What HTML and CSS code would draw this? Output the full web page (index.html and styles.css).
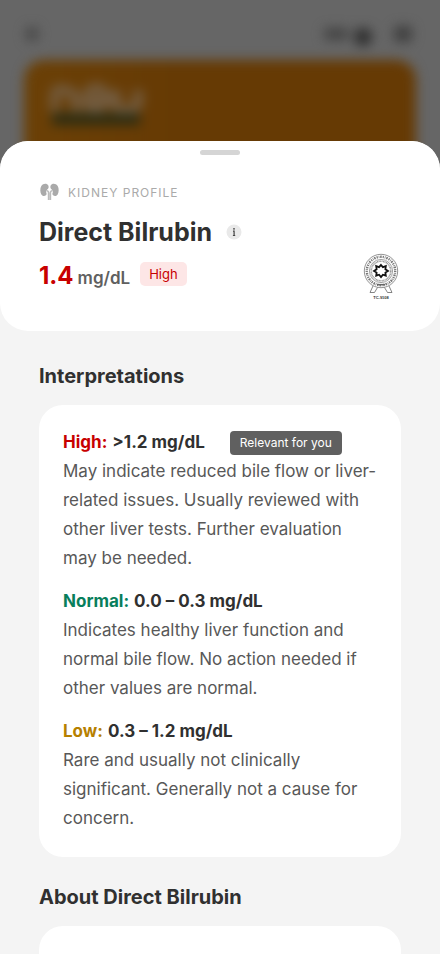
FILE: index.html
```html
<!DOCTYPE html>
<html lang="en">
<head>
<meta charset="utf-8">
<meta name="viewport" content="width=device-width, initial-scale=1">
<title>Direct Bilrubin</title>
<link rel="stylesheet" href="styles.css">
</head>
<body>
<div class="backdrop" aria-hidden="true">
  <div class="behind">
    <div class="topbar">
      <span class="blob"></span>
      <span class="blob wide"></span>
      <span class="blob dark"></span>
      <span class="blob last"></span>
    </div>
    <div class="banner">
      <svg class="logo" viewBox="0 0 94 44">
        <path d="M4 30V16Q4 6 14 8T26 16V30M38 20H56Q56 6 46 6T38 20Q38 30 54 28M66 8V22Q68 30 78 28T88 20V8" fill="none" stroke="#735c40" stroke-width="10"/>
        <rect x="2" y="31" width="88" height="12" fill="#2c2c12"/>
      </svg>
    </div>
  </div>
</div>
<main class="sheet">
  <header class="summary">
    <div class="handle"></div>
    <div class="profile">
      <svg class="kidneys" viewBox="0 0 20 18" aria-hidden="true">
        <path fill="#aaa" d="M7.5 1.2C5.8.2 3.2.8 1.800 3C.4 5.400.5 9.600 2 11.700C3.300 13.500 6.200 13.400 7 11.600C7.500 10.300 6.200 9.300 6.700 8C7.200 6.700 8.900 6.300 9.100 4.600C9.300 3.100 8.700 1.800 7.500 1.200Z"/>
        <path fill="#aaa" d="M12.500 1.200C14.200.2 16.800.8 18.200 3C19.600 5.400 19.500 9.600 18 11.700C16.700 13.500 13.800 13.400 13 11.600C12.500 10.300 13.800 9.300 13.300 8C12.800 6.700 11.100 6.300 10.900 4.600C10.700 3.100 11.300 1.800 12.500 1.200Z"/>
        <path fill="none" stroke="#bbb" stroke-width="1.600" d="M6.800 7.800C8.300 7.500 9.100 8.500 9.100 10V17M13.200 7.800C11.700 7.500 10.900 8.500 10.900 10V17"/>
      </svg>
      <span>KIDNEY PROFILE</span>
    </div>
    <div class="title-row">
      <h1>Direct Bilrubin</h1>
      <button class="info" type="button" aria-label="Information">
        <svg viewBox="0 0 16 16" aria-hidden="true"><circle cx="8" cy="8" r="7.500" fill="#e9e9e9"/><circle cx="8" cy="4.800" r=".9" fill="#444"/><path d="M7 7.200H8.100V11.500M6.900 11.500H9.200" fill="none" stroke="#444" stroke-width="1.200"/></svg>
      </button>
    </div>
    <div class="reading">
      <strong class="value">1.4</strong>
      <span class="unit">mg/dL</span>
      <span class="tag">High</span>
    </div>
    <svg class="seal" viewBox="0 0 36 48" role="img" aria-label="Accreditation TC-9108">
      <g fill="none" stroke="#666">
        <path d="M10 33L7 39.500H11.500L14.500 34.500M26 33L29 39.500H24.500L21.500 34.500" stroke-width=".8"/>
        <circle cx="18" cy="18" r="16.700" stroke-width=".7"/>
        <circle cx="18" cy="18" r="14.200" stroke-width="2.400" stroke-dasharray="1.200 .9 .7 .8 1.600 1" stroke="#777"/>
        <circle cx="18" cy="18" r="11.600" stroke-width=".6"/>
        <circle cx="18" cy="18" r="9.800" stroke-width="1.600" stroke="#999" stroke-dasharray="1 .5"/>
        <path d="M14 31.600H22" stroke-width="1.400"/>
      </g>
      <path d="M18 12L19.900 14.200L22.800 13.200L22.400 16.200L25 17.900L22.400 19.600L22.800 22.600L19.900 21.700L18 24L16.100 21.700L13.200 22.600L13.600 19.600L11 17.900L13.600 16.200L13.200 13.200L16.100 14.200Z" fill="#fff" stroke="#111" stroke-width="1.800"/>
      <text x="18" y="46" text-anchor="middle">TC-9108</text>
    </svg>
  </header>
  <section class="section">
    <h2>Interpretations</h2>
    <div class="card">
      <article>
        <h3><span class="high">High:</span> &gt;1.2 mg/dL <span class="relevant">Relevant for you</span></h3>
        <p>May indicate reduced bile flow or liver-related issues. Usually reviewed with other liver tests. Further evaluation may be needed.</p>
      </article>
      <article>
        <h3><span class="normal">Normal:</span> 0.0 – 0.3 mg/dL</h3>
        <p>Indicates healthy liver function and normal bile flow. No action needed if other values are normal.</p>
      </article>
      <article>
        <h3><span class="low">Low:</span> 0.3 – 1.2 mg/dL</h3>
        <p>Rare and usually not clinically significant. Generally not a cause for concern.</p>
      </article>
    </div>
  </section>
  <section class="section">
    <h2>About Direct Bilrubin</h2>
    <div class="card about"></div>
  </section>
</main>
</body>
</html>
```

FILE: styles.css
```css
* { box-sizing: border-box; }
body {
  margin: 0;
  height: 100vh;
  overflow: hidden;
  padding-top: 141px;
  background: #666;
  color: #303030;
  font-family: Inter, "Open Sans", sans-serif;
}
h1, h2, h3, p { margin: 0; }

.backdrop {
  position: absolute;
  inset: 0 0 auto;
  height: 200px;
  overflow: hidden;
}
.behind { filter: blur(6px); }
.topbar {
  display: flex;
  align-items: center;
  height: 60px;
  padding: 8px 28px 0 26px;
}
.blob { width: 12px; height: 14px; border-radius: 4px; background: #484848; }
.wide { width: 24px; height: 12px; margin-left: auto; background: #444; }
.dark { height: 18px; width: 18px; margin: 6px 22px 0 6px; border-radius: 8px; background: #303030; }
.last { width: 18px; height: 16px; background: #404040; }
.banner {
  height: 240px;
  margin: 0 24px;
  padding: 22px 26px;
  border-radius: 20px;
  background: linear-gradient(90deg, #6b4006, #663a04 40%);
}
.logo { display: block; width: 94px; height: 44px; }

.sheet {
  position: relative;
  height: 100%;
  overflow: hidden;
  border-radius: 28px 28px 0 0;
  background: #f4f4f4;
}
.summary {
  position: relative;
  height: 190px;
  padding: 9px 39px 0;
  border-radius: 28px;
  background: #fff;
}
.handle {
  width: 40px;
  height: 5px;
  margin: 0 auto;
  border-radius: 3px;
  background: #d5d5d5;
}
.profile {
  display: flex;
  align-items: center;
  gap: 8px;
  margin-top: 27px;
  height: 20px;
  color: #aaa;
  font-size: 12px;
  letter-spacing: 1px;
}
.kidneys { width: 21px; height: 18px; }
.title-row {
  display: flex;
  align-items: center;
  gap: 14px;
  height: 32px;
  margin-top: 14px;
}
h1 { font-size: 25px; line-height: 32px; font-weight: 700; }
.info { width: 16px; height: 16px; padding: 0; border: 0; background: none; }
.info svg { display: block; }
.reading {
  display: flex;
  align-items: baseline;
  height: 28px;
  margin-top: 14px;
}
.value { color: #c80000; font-size: 24px; line-height: 28px; }
.unit { margin-left: 4px; color: #606060; font-size: 17px; font-weight: 600; }
.tag {
  align-self: flex-start;
  margin-left: 10px;
  padding: 0 9px;
  border-radius: 5px;
  background: #fde6e6;
  color: #c80000;
  font-size: 13px;
  line-height: 24px;
}
.seal {
  position: absolute;
  top: 112px;
  right: 41px;
  width: 36px;
  height: 48px;
}
.seal text { font: 700 4px "Liberation Sans", sans-serif; fill: #333; }

.section { padding: 32px 39px 0; }
.section + .section { padding-top: 27px; }
h2 { margin-bottom: 16px; font-size: 20px; line-height: 26px; font-weight: 700; }
.card {
  display: flex;
  flex-direction: column;
  gap: 14px;
  padding: 23px 24px 24px;
  border-radius: 24px;
  background: #fff;
}
.about { min-height: 120px; }
h3, p { font-size: 17px; line-height: 29px; }
h3 { display: flex; align-items: center; gap: 5px; font-weight: 700; }
p { color: #585858; }
.high { color: #c80000; }
.normal { color: #087e5c; }
.low { color: #b68000; }
.relevant {
  margin-left: 20px;
  padding: 0 10px;
  border-radius: 4px;
  background: #606060;
  color: #fff;
  font-size: 12px;
  font-weight: 400;
  line-height: 24px;
}
```
